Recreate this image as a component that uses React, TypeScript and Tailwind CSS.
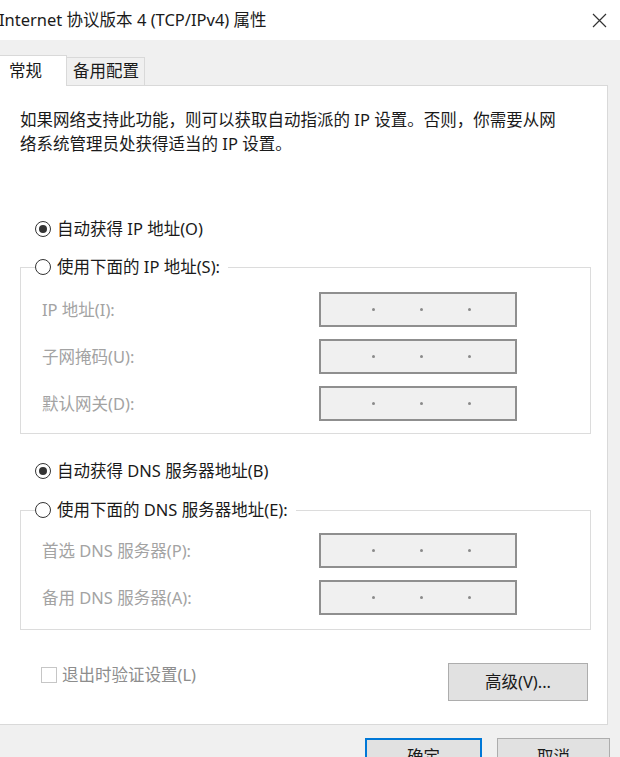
import React from "react";

const FONT = { fontFamily: '"Noto Sans", "Noto Sans CJK SC", sans-serif' };

function Radio({ checked }: { checked?: boolean }) {
  return (
    <span className="flex h-[16px] w-[16px] shrink-0 items-center justify-center rounded-full border-[1.5px] border-[#333333] bg-white">
      {checked ? <span className="h-[8px] w-[8px] rounded-full bg-[#333333]" /> : null}
    </span>
  );
}

function RadioRow({ checked, label }: { checked?: boolean; label: string }) {
  return (
    <div className="flex h-[24px] items-center gap-[6px] pl-[15px] text-[16.5px] text-[#1a1a1a]">
      <Radio checked={checked} />
      <span className="leading-[24px]">{label}</span>
    </div>
  );
}

function IpBox() {
  return (
    <div className="flex h-[35px] w-[198px] items-center gap-[45px] border-2 border-[#8f8f8f] bg-[#f0f0f0] pl-[51px]">
      <span className="h-[3px] w-[3px] rounded-full bg-[#8a8a8a]" />
      <span className="h-[3px] w-[3px] rounded-full bg-[#8a8a8a]" />
      <span className="h-[3px] w-[3px] rounded-full bg-[#8a8a8a]" />
    </div>
  );
}

function FieldRow({ label }: { label: string }) {
  return (
    <div className="flex items-center pl-[7px]">
      <span className="w-[277px] text-[16.5px] leading-[24px] text-[#a3a3a3]">{label}</span>
      <IpBox />
    </div>
  );
}

function Group({
  legend,
  rows,
  pt,
  pb,
}: {
  legend: string;
  rows: string[];
  pt: string;
  pb: string;
}) {
  return (
    <fieldset className={`m-0 w-[571px] border border-[#dcdcdc] px-[14px] ${pt} ${pb}`}>
      <legend className="flex h-[24px] items-center gap-[6px] p-0 pr-[8px] text-[16.5px] text-[#1a1a1a]">
        <Radio />
        <span className="leading-[24px]">{legend}</span>
      </legend>
      <div className="flex flex-col gap-[12px]">
        {rows.map((r) => (
          <FieldRow key={r} label={r} />
        ))}
      </div>
    </fieldset>
  );
}

export default function App() {
  return (
    <div className="h-[757px] w-[620px] overflow-hidden bg-[#f0f0f0]" style={FONT}>
      {/* Title bar */}
      <div className="flex h-[40px] items-center justify-between bg-white pr-[12px]">
        <span className="-ml-[1px] text-[16.5px] leading-[24px] text-[#1a1a1a]">
          Internet 协议版本 4 (TCP/IPv4) 属性
        </span>
        <svg width="15" height="15" viewBox="0 0 15 15" className="mr-[1px]">
          <path d="M1 1 L14 14 M14 1 L1 14" stroke="#333333" strokeWidth="1.2" fill="none" />
        </svg>
      </div>

      {/* Tabs */}
      <div className="mt-[15px] flex h-[31px] w-[608px] items-end">
        <div className="flex h-[31px] w-[67px] items-center border-r border-t border-[#d9d9d9] bg-white pl-[9px] text-[16.5px] text-[#1a1a1a]">
          常规
        </div>
        <div className="flex h-[29px] w-[78px] items-center border-b border-r border-t border-[#d9d9d9] bg-[#f0f0f0] pl-[6px] text-[16.5px] text-[#1a1a1a]">
          备用配置
        </div>
        <div className="h-px flex-1 bg-[#d9d9d9]" />
      </div>

      {/* Panel */}
      <div className="w-[608px] border-b border-r border-[#d9d9d9] bg-white pb-[23px] pl-[20px] pt-[22px]">
        <p className="text-[16.5px] leading-[24px] text-[#1a1a1a]">
          如果网络支持此功能，则可以获取自动指派的 IP 设置。否则，你需要从网
          <br />
          络系统管理员处获得适当的 IP 设置。
        </p>

        <div className="mt-[61px]">
          <RadioRow checked label="自动获得 IP 地址(O)" />
        </div>
        <div className="mt-[14px]">
          <Group
            legend="使用下面的 IP 地址(S):"
            rows={["IP 地址(I):", "子网掩码(U):", "默认网关(D):"]}
            pt="pt-[13px]"
            pb="pb-[12px]"
          />
        </div>

        <div className="mt-[25px]">
          <RadioRow checked label="自动获得 DNS 服务器地址(B)" />
        </div>
        <div className="mt-[15px]">
          <Group
            legend="使用下面的 DNS 服务器地址(E):"
            rows={["首选 DNS 服务器(P):", "备用 DNS 服务器(A):"]}
            pt="pt-[11px]"
            pb="pb-[14px]"
          />
        </div>

        <div className="mt-[33px] flex w-[570px] items-start justify-between">
          <div className="flex h-[24px] items-center gap-[5px] pl-[21px]">
            <span className="h-[16px] w-[16px] border border-[#c6c6c6] bg-white" />
            <span className="text-[16.5px] leading-[24px] text-[#8d8d8d]">退出时验证设置(L)</span>
          </div>
          <button className="mr-[2px] flex h-[38px] w-[140px] items-center justify-center border border-[#adadad] bg-[#e1e1e1] text-[16.5px] text-[#1a1a1a]">
            高级(V)...
          </button>
        </div>
      </div>

      {/* Bottom buttons */}
      <div className="mt-[13px] flex justify-end gap-[15px] pr-[10px]">
        <button className="flex h-[38px] w-[117px] items-center justify-center border-2 border-[#0078d7] bg-[#e1e1e1] text-[16.5px] leading-[24px] text-[#1a1a1a]">
          确定
        </button>
        <button className="flex h-[38px] w-[113px] items-center justify-center border border-[#adadad] bg-[#e1e1e1] text-[16.5px] leading-[24px] text-[#1a1a1a]">
          取消
        </button>
      </div>
    </div>
  );
}
